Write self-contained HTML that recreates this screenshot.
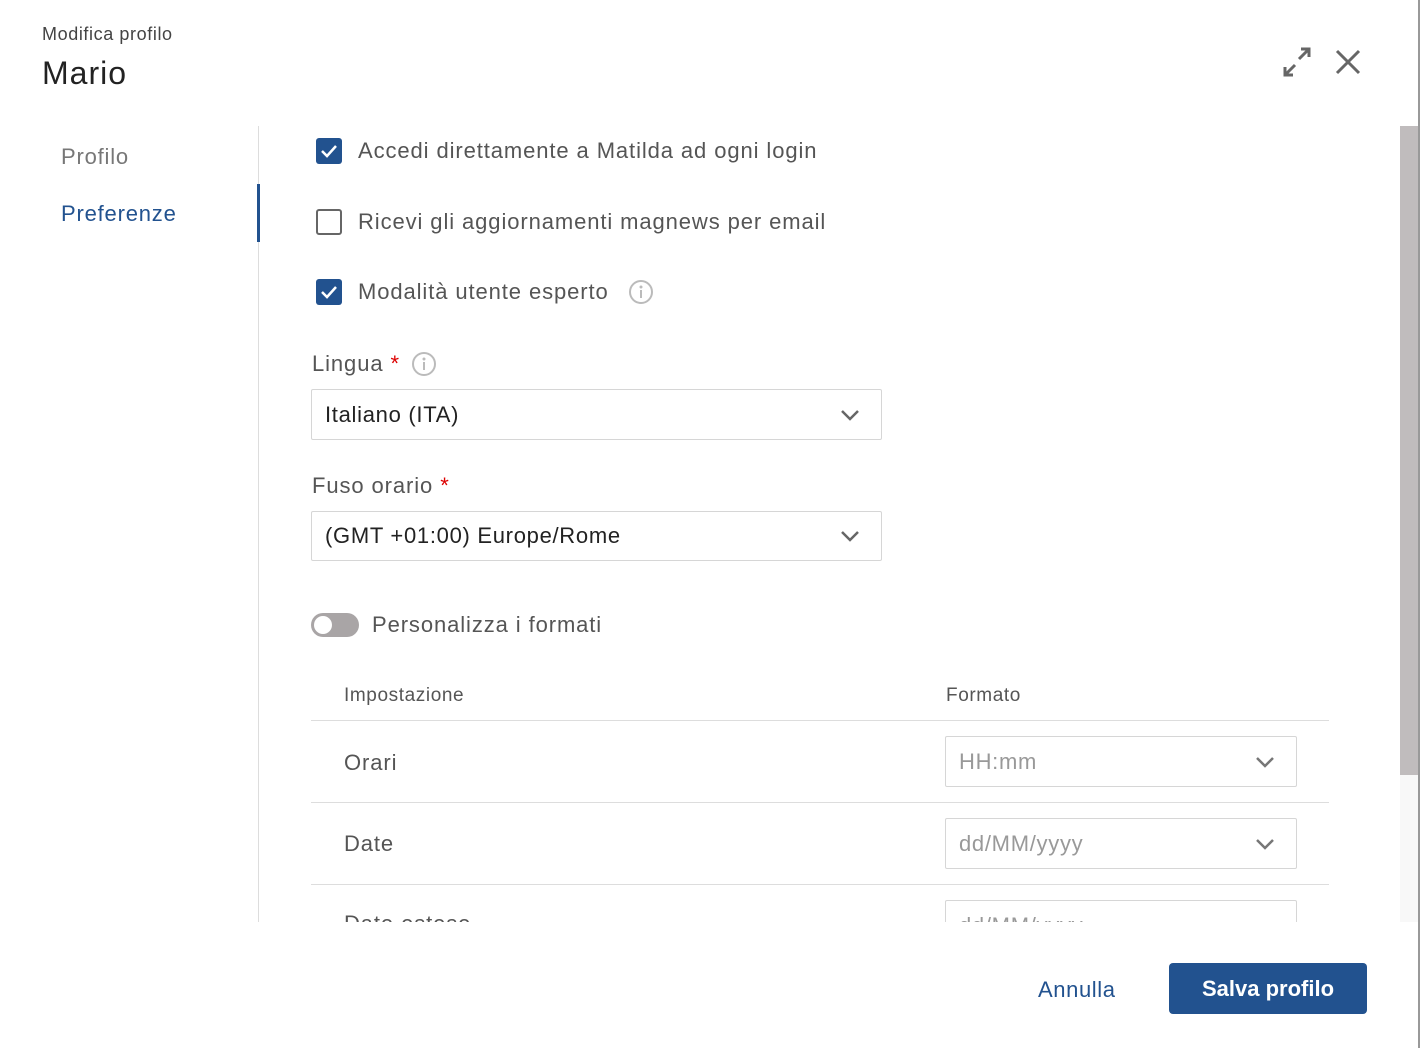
<!DOCTYPE html>
<html><head><meta charset="utf-8"><style>
*{margin:0;padding:0;box-sizing:border-box}
body{width:1420px;height:1048px;background:#fff;font-family:"Liberation Sans",sans-serif;color:#555;position:relative;overflow:hidden}
.a{position:absolute;white-space:nowrap}
.cb{position:absolute;width:26px;height:26px;border-radius:3px;background:#22528f}
.cbo{position:absolute;width:26px;height:26px;border-radius:3px;border:2.5px solid #666;background:#fff}
.lbl{font-size:22px;color:#555;letter-spacing:0.9px}
.sel{position:absolute;border:1px solid #d6d6d6;border-radius:2px;background:#fff}
.sel span{position:absolute;left:13px;top:50%;transform:translateY(-50%);font-size:22px;letter-spacing:0.7px}
.sel svg{position:absolute;right:21px;top:50%;margin-top:-6px}
.hr{position:absolute;left:311px;width:1018px;height:1px;background:#ddd}
</style></head><body>
<div class="a" style="left:42px;top:24px;font-size:18px;color:#444;letter-spacing:0.6px">Modifica profilo</div>
<div class="a" style="left:42px;top:55px;font-size:32px;color:#222;letter-spacing:1px">Mario</div>
<svg class="a" style="left:1281px;top:46px" width="32" height="32" viewBox="0 0 32 32" fill="none" stroke="#666" stroke-width="3"><path d="M18 13L28 3M20 3h8v8M14 19L4 29M4 21v8h8"/></svg>
<svg class="a" style="left:1335px;top:49px" width="26" height="26" viewBox="0 0 26 26" stroke="#666" stroke-width="3"><path d="M2 2L24 24M24 2L2 24"/></svg>

<div class="a" style="left:61px;top:144px;font-size:22px;color:#777;letter-spacing:0.8px">Profilo</div>
<div class="a" style="left:61px;top:201px;font-size:22px;color:#22528f;letter-spacing:0.8px">Preferenze</div>
<div class="a" style="left:258px;top:126px;width:1px;height:796px;background:#ddd"></div>
<div class="a" style="left:257px;top:184px;width:3px;height:58px;background:#22528f"></div>

<div class="cb" style="left:316px;top:138px"><svg width="26" height="26"><path d="M6 13l5 5 9-10" stroke="#fff" stroke-width="2.5" fill="none"/></svg></div>
<div class="a lbl" style="left:358px;top:138px">Accedi direttamente a Matilda ad ogni login</div>
<div class="cbo" style="left:316px;top:209px"></div>
<div class="a lbl" style="left:358px;top:209px">Ricevi gli aggiornamenti magnews per email</div>
<div class="cb" style="left:316px;top:279px"><svg width="26" height="26"><path d="M6 13l5 5 9-10" stroke="#fff" stroke-width="2.5" fill="none"/></svg></div>
<div class="a lbl" style="left:358px;top:279px">Modalità utente esperto</div>
<svg class="a" style="left:628px;top:279px" width="26" height="26"><circle cx="13" cy="13" r="11" stroke="#bbb" stroke-width="2" fill="none"/><circle cx="13" cy="8" r="1.5" fill="#bbb"/><path d="M13 11v8" stroke="#bbb" stroke-width="2"/></svg>

<div class="a lbl" style="left:312px;top:351px">Lingua <span style="color:#d00">*</span></div>
<svg class="a" style="left:411px;top:351px" width="26" height="26"><circle cx="13" cy="13" r="11" stroke="#bbb" stroke-width="2" fill="none"/><circle cx="13" cy="8" r="1.5" fill="#bbb"/><path d="M13 11v8" stroke="#bbb" stroke-width="2"/></svg>
<div class="sel" style="left:311px;top:389px;width:571px;height:51px"><span style="color:#222">Italiano (ITA)</span><svg width="20" height="12"><path d="M2 2l8 8 8-8" stroke="#666" stroke-width="2.5" fill="none"/></svg></div>

<div class="a lbl" style="left:312px;top:473px">Fuso orario <span style="color:#d00">*</span></div>
<div class="sel" style="left:311px;top:511px;width:571px;height:50px"><span style="color:#222">(GMT +01:00) Europe/Rome</span><svg width="20" height="12"><path d="M2 2l8 8 8-8" stroke="#666" stroke-width="2.5" fill="none"/></svg></div>

<div class="a" style="left:311px;top:613px;width:48px;height:24px;border-radius:12px;background:#a9a5a6"><div style="position:absolute;left:3px;top:3px;width:18px;height:18px;border-radius:50%;background:#fff"></div></div>
<div class="a lbl" style="left:372px;top:612px">Personalizza i formati</div>

<div class="a" style="left:344px;top:685px;font-size:19px;color:#555;letter-spacing:0.6px">Impostazione</div>
<div class="a" style="left:946px;top:685px;font-size:19px;color:#555;letter-spacing:0.6px">Formato</div>
<div class="hr" style="top:720px"></div>
<div class="a lbl" style="left:344px;top:750px">Orari</div>
<div class="sel" style="left:945px;top:736px;width:352px;height:51px"><span style="color:#999">HH:mm</span><svg width="20" height="12"><path d="M2 2l8 8 8-8" stroke="#777" stroke-width="2.5" fill="none"/></svg></div>
<div class="hr" style="top:802px"></div>
<div class="a lbl" style="left:344px;top:831px">Date</div>
<div class="sel" style="left:945px;top:818px;width:352px;height:51px"><span style="color:#999">dd/MM/yyyy</span><svg width="20" height="12"><path d="M2 2l8 8 8-8" stroke="#777" stroke-width="2.5" fill="none"/></svg></div>
<div class="hr" style="top:884px"></div>
<div class="a" style="left:300px;top:900px;width:1040px;height:22px;overflow:hidden">
<div class="a lbl" style="left:44px;top:11px">Date estese</div>
<div class="sel" style="left:645px;top:0;width:352px;height:51px"><span style="color:#999">dd/MM/yyyy</span></div>
</div>

<div class="a" style="left:1400px;top:126px;width:18px;height:796px;background:#f8f8f8"></div>
<div class="a" style="left:1400px;top:126px;width:18px;height:649px;background:#c0bcbd"></div>
<div class="a" style="left:1418px;top:0;width:2px;height:1048px;background:#999"></div>

<div class="a" style="left:1038px;top:977px;font-size:22px;color:#22528f;letter-spacing:0.6px">Annulla</div>
<div class="a" style="left:1169px;top:963px;width:198px;height:51px;border-radius:4px;background:#22528f;color:#fff;font-size:22px;font-weight:bold;text-align:center;line-height:51px">Salva profilo</div>
</body></html>
